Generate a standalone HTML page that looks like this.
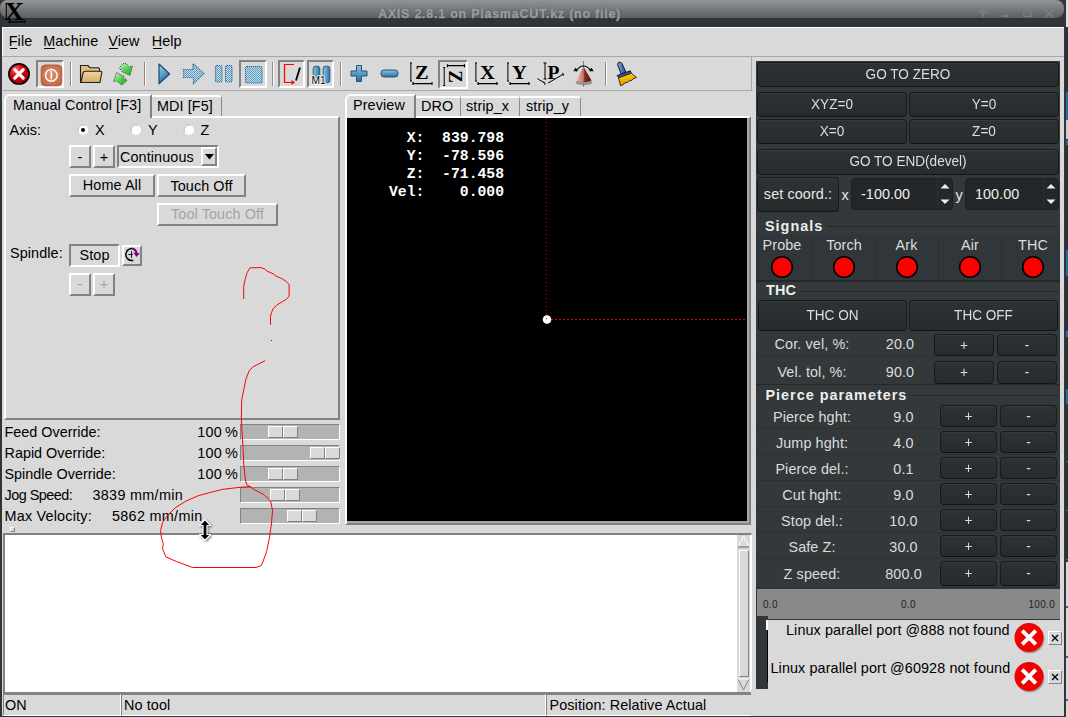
<!DOCTYPE html>
<html><head><meta charset="utf-8"><style>
html,body{margin:0;padding:0;}
body{width:1068px;height:717px;overflow:hidden;position:relative;background:#d9d9d9;font-family:"Liberation Sans",sans-serif;}
.a{position:absolute;}
.t{white-space:nowrap;line-height:1;}
</style></head><body>
<div class="a" style="left:0px;top:0px;width:1068px;height:717px;background:#d9d9d9;"></div>
<div class="a" style="left:0px;top:0px;width:1068px;height:27px;background:#2f3538;"></div>
<div class="a" style="left:0px;top:0px;width:1064px;height:17.5px;background:linear-gradient(#929597,#5a5f62);border-radius:7px 8px 8px 8px;"></div>
<div class="a" style="left:1066px;top:0px;width:2px;height:717px;background:#2b3337;"></div>
<div class="a" style="left:1066px;top:0px;width:2px;height:27px;background:#e0e0e0;"></div>
<div class="a" style="left:1066px;top:92px;width:2px;height:28px;background:#1f6f9f;"></div>
<div class="a" style="left:1066px;top:120px;width:2px;height:19px;background:#c8ccce;"></div>
<div class="a" style="left:1066px;top:140px;width:2px;height:5px;background:#1f6f9f;"></div>
<div class="a" style="left:1066px;top:250px;width:2px;height:26px;background:#1f6f9f;"></div>
<div class="a" style="left:1066px;top:331px;width:2px;height:6px;background:#1f6f9f;"></div>
<div class="a" style="left:1066px;top:389px;width:2px;height:15px;background:#1f6f9f;"></div>
<div class="a" style="left:1066px;top:461px;width:2px;height:1px;background:#1f6f9f;"></div>
<div class="a" style="left:1066px;top:510px;width:2px;height:1px;background:#1f6f9f;"></div>
<div class="a" style="left:1066px;top:559px;width:2px;height:1px;background:#1f6f9f;"></div>
<div class="a" style="left:1066px;top:562px;width:2px;height:155px;background:#d9d9d9;"></div>
<div class="a" style="left:1066px;top:606px;width:2px;height:2px;background:#1f6f9f;"></div>
<div class="a" style="left:1066px;top:656px;width:2px;height:2px;background:#1f6f9f;"></div>
<div class="a" style="left:1066px;top:699px;width:2px;height:2px;background:#1f6f9f;"></div>
<div class="a" style="left:0px;top:27px;width:2px;height:690px;background:#2f3538;"></div>
<div class="a" style="left:1064px;top:27px;width:2px;height:690px;background:#2f3538;"></div>
<div class="a" style="left:0px;top:716px;width:1066px;height:1px;background:#2f3538;"></div>
<svg class="a" style="left:0px;top:0px;" width="30" height="27" viewBox="0 0 30 27"><text x="4.6" y="19.7" font-family="Liberation Serif" font-weight="bold" font-size="24.5" fill="#000" transform="translate(4.6,19.7) scale(1.1,1) translate(-4.6,-19.7)">X</text><path d="M6.3 3.5v16" stroke="#000" stroke-width="1" fill="none"/><path d="M9.2 21.8h15.5M9.2 20.3v3M24.7 20.3v3" stroke="#000" stroke-width="1.2" fill="none"/></svg>
<div class="a t" style="left:299.50px;width:400px;text-align:center;top:8.42px;font-size:12.5px;letter-spacing:0.75px;color:#9a9ea0;font-weight:bold;font-family:'Liberation Sans', sans-serif;-webkit-text-stroke:0.35px #9a9ea0;text-shadow:0 0 1.5px rgba(40,45,48,0.8);">AXIS 2.8.1 on PlasmaCUT.kz (no file)</div>
<svg class="a" style="left:976px;top:6px;" width="90" height="16" viewBox="0 0 90 16"><g stroke="#7c8082" stroke-width="1.6" fill="none"><path d="M7.25 4v7M3.5 7.5l3.75-3.6 3.75 3.6"/><path d="M26 9.9h6" stroke-width="1.7"/><rect x="47.8" y="4.3" width="6.8" height="6.2" stroke-width="1.2"/><path d="M69.5 4l7.5 7M77 4l-7.5 7"/></g></svg>
<div class="a" style="left:2px;top:27px;width:1062px;height:1px;background:#ffffff;"></div>
<div class="a" style="left:2px;top:27px;width:1px;height:29px;background:#ffffff;"></div>
<div class="a" style="left:3px;top:56px;width:1061px;height:1px;background:#a8a8a8;"></div>
<div class="a t" style="left:8.70px;top:34.31px;font-size:14.4px;letter-spacing:0.1px;color:#000;font-weight:normal;font-family:'Liberation Sans', sans-serif;">File</div>
<div class="a t" style="left:43.20px;top:34.31px;font-size:14.4px;letter-spacing:0.1px;color:#000;font-weight:normal;font-family:'Liberation Sans', sans-serif;">Machine</div>
<div class="a t" style="left:108.20px;top:34.31px;font-size:14.4px;letter-spacing:0.1px;color:#000;font-weight:normal;font-family:'Liberation Sans', sans-serif;">View</div>
<div class="a t" style="left:151.70px;top:34.31px;font-size:14.4px;letter-spacing:0.1px;color:#000;font-weight:normal;font-family:'Liberation Sans', sans-serif;">Help</div>
<div class="a" style="left:9.5px;top:48px;width:7.5px;height:1px;background:#000;"></div>
<div class="a" style="left:44px;top:48px;width:11px;height:1px;background:#000;"></div>
<div class="a" style="left:109px;top:48px;width:9px;height:1px;background:#000;"></div>
<div class="a" style="left:152.5px;top:48px;width:9.5px;height:1px;background:#000;"></div>
<div class="a" style="left:3px;top:90px;width:749px;height:1px;background:#a8a8a8;"></div>
<div class="a" style="left:751px;top:57px;width:1px;height:34px;background:#a8a8a8;"></div>
<div class="a" style="left:70px;top:62px;width:1px;height:24px;background:#8a8a8a;"></div>
<div class="a" style="left:71px;top:62px;width:1px;height:24px;background:#ffffff;"></div>
<div class="a" style="left:144px;top:62px;width:1px;height:24px;background:#8a8a8a;"></div>
<div class="a" style="left:145px;top:62px;width:1px;height:24px;background:#ffffff;"></div>
<div class="a" style="left:272px;top:62px;width:1px;height:24px;background:#8a8a8a;"></div>
<div class="a" style="left:273px;top:62px;width:1px;height:24px;background:#ffffff;"></div>
<div class="a" style="left:340px;top:62px;width:1px;height:24px;background:#8a8a8a;"></div>
<div class="a" style="left:341px;top:62px;width:1px;height:24px;background:#ffffff;"></div>
<div class="a" style="left:605px;top:62px;width:1px;height:24px;background:#8a8a8a;"></div>
<div class="a" style="left:606px;top:62px;width:1px;height:24px;background:#ffffff;"></div>
<div class="a" style="left:36px;top:60px;width:28px;height:28px;box-sizing:border-box;background:#d9d9d9;border:2px solid;border-color:#828282 #ffffff #ffffff #828282;"></div>
<div class="a" style="left:239px;top:60px;width:28px;height:28px;box-sizing:border-box;background:#d9d9d9;border:2px solid;border-color:#828282 #ffffff #ffffff #828282;"></div>
<div class="a" style="left:278px;top:60px;width:27px;height:28px;box-sizing:border-box;background:#d9d9d9;border:2px solid;border-color:#828282 #ffffff #ffffff #828282;"></div>
<div class="a" style="left:307px;top:60px;width:27px;height:28px;box-sizing:border-box;background:#d9d9d9;border:2px solid;border-color:#828282 #ffffff #ffffff #828282;"></div>
<div class="a" style="left:438px;top:60px;width:30px;height:29px;box-sizing:border-box;background:#d9d9d9;border:2px solid;border-color:#828282 #ffffff #ffffff #828282;"></div>
<svg class="a" style="left:7px;top:62px;" width="25" height="25" viewBox="0 0 25 25"><defs><radialGradient id="es" cx="0.35" cy="0.3" r="0.75"><stop offset="0" stop-color="#ff6060"/><stop offset="0.45" stop-color="#dd0010"/><stop offset="1" stop-color="#a00000"/></radialGradient></defs><circle cx="12" cy="11.9" r="10.1" fill="url(#es)" stroke="#000" stroke-width="1.7"/><path d="M7.8 7.7l8.4 8.4M16.2 7.7l-8.4 8.4" stroke="#fff" stroke-width="3.1" stroke-linecap="round"/></svg>
<svg class="a" style="left:40px;top:64px;" width="23" height="23" viewBox="0 0 23 23"><defs><radialGradient id="pw" cx="0.5" cy="0.45" r="0.65"><stop offset="0" stop-color="#dc9575"/><stop offset="1" stop-color="#c4603e"/></radialGradient></defs><rect x="1.2" y="1" width="20.6" height="20.8" rx="4" fill="url(#pw)" stroke="#b04a2a" stroke-width="0.8"/><circle cx="11.3" cy="11.4" r="5.8" fill="none" stroke="#fff" stroke-width="1.5"/><path d="M11.3 7v8.3" stroke="#fff" stroke-width="1.5"/></svg>
<svg class="a" style="left:78px;top:62px;" width="26" height="24" viewBox="0 0 26 24"><defs><linearGradient id="fd" x1="0" y1="0" x2="0" y2="1"><stop offset="0" stop-color="#f0d6a0"/><stop offset="1" stop-color="#d8aa68"/></linearGradient></defs><path d="M2.5 3.5h7.3l2.2 2.3h8.3q1.2 0 1.2 1.2V20.5H2.5z" fill="#e2bd80" stroke="#1e1e1e" stroke-width="1.1" stroke-linejoin="round"/><path d="M7.5 9.3h15.2q1.3 0 1.1 1.2L22 20.5H2.8L4.8 12q0.5-2.7 2.7-2.7z" fill="url(#fd)" stroke="#1e1e1e" stroke-width="1.1" stroke-linejoin="round"/></svg>
<svg class="a" style="left:108px;top:60px;" width="30" height="28" viewBox="0 0 30 28"><defs><linearGradient id="rl" x1="0" y1="0" x2="1" y2="1"><stop offset="0" stop-color="#c8f5c8"/><stop offset="0.6" stop-color="#44cc44"/><stop offset="1" stop-color="#2aa52a"/></linearGradient></defs><g fill="url(#rl)" stroke="#333" stroke-width="0.9" stroke-dasharray="1 1.1" stroke-linejoin="round"><path d="M11 8.5L15 3.5 18 3.5 21.5 7 24.5 6 22 15.5 13.5 11.5 16 9.5 15 8.3 13 9.8z"/><path d="M5.5 21.5L8.5 12.5 16.5 16.5 14.5 18.3 15 19.5 17.2 18.3 19 20.5 14.5 24.5 12.5 24.5 9 21z"/></g></svg>
<svg class="a" style="left:156px;top:62px;" width="16" height="24" viewBox="0 0 16 24"><defs><linearGradient id="pl" x1="0" y1="0" x2="0.4" y2="1"><stop offset="0" stop-color="#a8dcef"/><stop offset="1" stop-color="#2468a0"/></linearGradient></defs><path d="M3 2L13.6 12 3 21.8z" fill="url(#pl)" stroke="#11507c" stroke-width="1.25" stroke-linejoin="round"/></svg>
<svg class="a" style="left:178px;top:58px;" width="90" height="32" viewBox="0 0 90 32"><defs><pattern id="chk" width="2" height="2" patternUnits="userSpaceOnUse"><rect width="2" height="2" fill="#b8dce9"/><rect width="1" height="1" fill="#6a9cbd"/><rect x="1" y="1" width="1" height="1" fill="#6a9cbd"/></pattern><linearGradient id="chg" x1="0" y1="0" x2="0" y2="1"><stop offset="0" stop-color="#fff" stop-opacity="0.25"/><stop offset="1" stop-color="#000" stop-opacity="0.08"/></linearGradient></defs><g stroke="#1f5a85" stroke-width="1.15" stroke-dasharray="1 1"><path d="M5.5 69.5H15V63.5L26 73.5 15.5 83.5V77.5H5.5z" transform="translate(0,-58)" fill="url(#chk)"/><rect x="37.5" y="7.5" width="6.5" height="16.5" rx="1.5" fill="url(#chk)"/><rect x="47.5" y="7.5" width="6.5" height="16.5" rx="1.5" fill="url(#chk)"/><rect x="67.5" y="8.5" width="16.5" height="16.5" rx="1.5" fill="url(#chk)"/></g></svg>
<svg class="a" style="left:282px;top:63px;" width="22" height="23" viewBox="0 0 22 23"><path d="M12 1.5H2.5V19.5H10" fill="none" stroke="#ff0000" stroke-width="1.2"/><path d="M9.5 17l3.5 2.5-3.5 2.5z" fill="#ff0000"/><path d="M18 4.5l-4 13" stroke="#000" stroke-width="1.8"/></svg>
<svg class="a" style="left:304px;top:58px;" width="34" height="32" viewBox="0 0 34 32"><defs><linearGradient id="m1" x1="0" y1="0" x2="1" y2="0"><stop offset="0" stop-color="#8cc4e0"/><stop offset="1" stop-color="#2b78a8"/></linearGradient><linearGradient id="bl" x1="0" y1="0" x2="0" y2="1"><stop offset="0" stop-color="#8cc4e0"/><stop offset="1" stop-color="#2a6e9e"/></linearGradient></defs><rect x="9.2" y="8.2" width="6.6" height="17" rx="2.5" fill="url(#m1)" stroke="#17537e" stroke-width="0.9"/><rect x="19.2" y="8.2" width="6.6" height="16.6" rx="2.5" fill="url(#m1)" stroke="#17537e" stroke-width="0.9"/><text x="7.6" y="26.1" font-family="Liberation Sans" font-size="10.2" fill="#000" stroke="#fff" stroke-width="1.6" paint-order="stroke" stroke-linejoin="round">M1</text></svg>
<svg class="a" style="left:350px;top:64px;" width="19" height="19" viewBox="0 0 19 19"><path d="M6.5 1.5h5v5.5h5.5v5h-5.5v5.5h-5v-5.5h-5.5v-5h5.5z" fill="url(#bl)" stroke="#1d5580" stroke-width="1" stroke-linejoin="round"/></svg>
<svg class="a" style="left:380px;top:69px;" width="19" height="10" viewBox="0 0 19 10"><rect x="1" y="1" width="17" height="7" rx="3" fill="url(#bl)" stroke="#1d5580" stroke-width="1"/></svg>
<svg class="a" style="left:410px;top:62px;" width="26" height="25" viewBox="0 0 26 25"><path d="M0.9 1v18M0 1h2M0 19h2" stroke="#000" stroke-width="1" fill="none"/><text x="5" y="17.2" font-family="Liberation Serif" font-weight="bold" font-size="19" fill="#000" transform="translate(5,17.2) scale(1.08,1) translate(-5,-17.2)">Z</text><path d="M3 21.6h19M3 20.1v3M22 20.1v3" stroke="#000" stroke-width="1.2" fill="none"/></svg>
<svg class="a" style="left:475px;top:62px;" width="26" height="25" viewBox="0 0 26 25"><path d="M0.9 1v18M0 1h2M0 19h2" stroke="#000" stroke-width="1" fill="none"/><text x="5" y="17.2" font-family="Liberation Serif" font-weight="bold" font-size="19" fill="#000" transform="translate(5,17.2) scale(1.08,1) translate(-5,-17.2)">X</text><path d="M3 21.6h19M3 20.1v3M22 20.1v3" stroke="#000" stroke-width="1.2" fill="none"/></svg>
<svg class="a" style="left:507px;top:62px;" width="26" height="25" viewBox="0 0 26 25"><path d="M0.9 1v18M0 1h2M0 19h2" stroke="#000" stroke-width="1" fill="none"/><text x="5" y="17.2" font-family="Liberation Serif" font-weight="bold" font-size="19" fill="#000" transform="translate(5,17.2) scale(1.08,1) translate(-5,-17.2)">Y</text><path d="M3 21.6h19M3 20.1v3M22 20.1v3" stroke="#000" stroke-width="1.2" fill="none"/></svg>
<svg class="a" style="left:440px;top:61px;" width="28" height="28" viewBox="0 0 28 28"><path d="M4.2 6.5v18M3.2 6.5h2M3.2 24.5h2" stroke="#000" stroke-width="1" fill="none"/><path d="M7.5 4.7h17M7.5 3.2v3M24.5 3.2v3" stroke="#000" stroke-width="1.2" fill="none"/><g transform="translate(15.3,15.6) rotate(90)"><text x="0" y="0" text-anchor="middle" dominant-baseline="central" font-family="Liberation Serif" font-weight="bold" font-size="19" fill="#000">Z</text></g></svg>
<svg class="a" style="left:534px;top:60px;" width="32" height="28" viewBox="0 0 32 28"><path d="M11 3v16M9.5 3h3M9.5 19h3" stroke="#000" stroke-width="1" fill="none"/><text x="13.5" y="19" font-family="Liberation Serif" font-weight="bold" font-size="19.5" fill="#000">P</text><path d="M3.4 18.6l7.3 4.5M14 23.1l15.3-9" stroke="#000" stroke-width="1" fill="none"/><path d="M9.5 21.8l1.6 1.5-0.4 1.6M28.5 12.8l1 1.5-0.3 1.5" stroke="#000" stroke-width="1" fill="none"/></svg>
<svg class="a" style="left:572px;top:60px;" width="24" height="28" viewBox="0 0 24 28"><defs><linearGradient id="cn" x1="0" y1="0" x2="1" y2="0"><stop offset="0" stop-color="#f8b8b0"/><stop offset="0.45" stop-color="#d86a60"/><stop offset="0.55" stop-color="#8a2a22"/><stop offset="1" stop-color="#4a0e0a"/></linearGradient></defs><ellipse cx="12" cy="22.5" rx="8.5" ry="2.8" fill="#000" opacity="0.3"/><path d="M11.5 6.5L4.5 20.5q7.5 3.5 15 0z" fill="url(#cn)"/><path d="M11.5 1.5v26" stroke="#fff" stroke-width="1"/><path d="M11.5 1.5v26" stroke="#000" stroke-width="1" stroke-dasharray="1 1"/><path d="M4 11.5q3-5.5 7.5-5.5M19 11.5q-3-5.5-7.5-5.5" stroke="#000" stroke-width="1.1" fill="none"/><path d="M1.3 11.5l4.8-1.2-2.8-2.6z M21.7 11.5l-4.8-1.2 2.8-2.6z" fill="#000"/></svg>
<svg class="a" style="left:612px;top:58px;" width="30" height="32" viewBox="0 0 30 32"><defs><linearGradient id="br" x1="0" y1="0" x2="0.3" y2="1"><stop offset="0" stop-color="#ffe800"/><stop offset="1" stop-color="#e08a00"/></linearGradient><linearGradient id="bh" x1="0" y1="0" x2="1" y2="0"><stop offset="0" stop-color="#8aa0e0"/><stop offset="1" stop-color="#2a45a0"/></linearGradient></defs><path d="M5.5 6.5Q6 3.5 8 4.2Q9.6 4.5 10.3 6L13.8 14 9.2 16.2z" fill="url(#bh)" stroke="#111" stroke-width="0.9"/><path d="M5.2 17.5L18.3 12.8 19.4 15.3 6.6 19.8z" fill="#3550b0" stroke="#111" stroke-width="0.9"/><path d="M6.6 19.8L19.4 15.3 24.5 19.5 21 20.8 20 22.3 17 23 15.5 24.5 13 24.8 11.5 26.5 8.5 27.7z" fill="url(#br)" stroke="#222" stroke-width="0.9"/></svg>
<div class="a" style="left:4px;top:116px;width:336px;height:304px;box-sizing:border-box;border-style:solid;border-width:2px 2px 2px 2px;border-color:#fff #828282 #828282 #fff;background:#d9d9d9;"></div>
<div class="a" style="left:150px;top:95px;width:72px;height:21px;box-sizing:border-box;border-top:2px solid #fff;border-right:1px solid #8a8a8a;border-top-right-radius:4px;background:#d9d9d9;"></div>
<div class="a" style="left:4px;top:94px;width:148px;height:24px;box-sizing:border-box;border-top:2px solid #fff;border-left:2px solid #fff;border-right:2px solid #828282;border-top-left-radius:6px;background:#d9d9d9;"></div>
<div class="a t" style="left:13.00px;top:97.61px;font-size:14.4px;letter-spacing:0.1px;color:#000;font-weight:normal;font-family:'Liberation Sans', sans-serif;">Manual Control [F3]</div>
<div class="a t" style="left:157.00px;top:99.01px;font-size:14.4px;letter-spacing:0.1px;color:#000;font-weight:normal;font-family:'Liberation Sans', sans-serif;">MDI [F5]</div>
<div class="a t" style="left:9.50px;top:123.41px;font-size:14.4px;letter-spacing:0.1px;color:#000;font-weight:normal;font-family:'Liberation Sans', sans-serif;">Axis:</div>
<svg class="a" style="left:77px;top:124px;" width="12" height="12" viewBox="0 0 12 12"><circle cx="6" cy="6" r="5" fill="#fff"/><path d="M1.5 8A5 5 0 0 1 8 1.3" stroke="#b8b8b8" stroke-width="1" fill="none"/><circle cx="6" cy="6" r="2" fill="#000"/></svg>
<div class="a t" style="left:95.00px;top:123.41px;font-size:14.4px;letter-spacing:0.1px;color:#000;font-weight:normal;font-family:'Liberation Sans', sans-serif;">X</div>
<svg class="a" style="left:130px;top:124px;" width="12" height="12" viewBox="0 0 12 12"><circle cx="6" cy="6" r="5" fill="#fff"/><path d="M1.5 8A5 5 0 0 1 8 1.3" stroke="#b8b8b8" stroke-width="1" fill="none"/></svg>
<div class="a t" style="left:148.00px;top:123.41px;font-size:14.4px;letter-spacing:0.1px;color:#000;font-weight:normal;font-family:'Liberation Sans', sans-serif;">Y</div>
<svg class="a" style="left:183px;top:124px;" width="12" height="12" viewBox="0 0 12 12"><circle cx="6" cy="6" r="5" fill="#fff"/><path d="M1.5 8A5 5 0 0 1 8 1.3" stroke="#b8b8b8" stroke-width="1" fill="none"/></svg>
<div class="a t" style="left:200.50px;top:123.41px;font-size:14.4px;letter-spacing:0.1px;color:#000;font-weight:normal;font-family:'Liberation Sans', sans-serif;">Z</div>
<div class="a" style="left:69px;top:145px;width:22px;height:23px;box-sizing:border-box;background:#d9d9d9;border:2px solid;border-color:#ffffff #828282 #828282 #ffffff;"></div>
<div class="a t" style="left:70.00px;width:20px;text-align:center;top:149.61px;font-size:14.4px;letter-spacing:0.1px;color:#000;font-weight:normal;font-family:'Liberation Sans', sans-serif;">-</div>
<div class="a" style="left:93px;top:145px;width:22px;height:23px;box-sizing:border-box;background:#d9d9d9;border:2px solid;border-color:#ffffff #828282 #828282 #ffffff;"></div>
<div class="a t" style="left:94.00px;width:20px;text-align:center;top:149.61px;font-size:14.4px;letter-spacing:0.1px;color:#000;font-weight:normal;font-family:'Liberation Sans', sans-serif;">+</div>
<div class="a" style="left:117px;top:145px;width:102px;height:23px;box-sizing:border-box;background:#d9d9d9;border:2px solid;border-color:#828282 #ffffff #ffffff #828282;"></div>
<div class="a t" style="left:120.00px;top:149.61px;font-size:14.4px;letter-spacing:0.1px;color:#000;font-weight:normal;font-family:'Liberation Sans', sans-serif;">Continuous</div>
<div class="a" style="left:201px;top:147px;width:16px;height:19px;box-sizing:border-box;background:#d9d9d9;border:2px solid;border-color:#ffffff #828282 #828282 #ffffff;"></div>
<svg class="a" style="left:204px;top:153px;" width="12" height="8" viewBox="0 0 12 8"><path d="M1 1h9l-4.5 5.5z" fill="#000"/></svg>
<div class="a" style="left:69px;top:174px;width:86px;height:23px;box-sizing:border-box;background:#d9d9d9;border:2px solid;border-color:#ffffff #828282 #828282 #ffffff;"></div>
<div class="a t" style="left:67.00px;width:90px;text-align:center;top:178.21px;font-size:14.4px;letter-spacing:0.1px;color:#000;font-weight:normal;font-family:'Liberation Sans', sans-serif;">Home All</div>
<div class="a" style="left:157px;top:174px;width:89px;height:23px;box-sizing:border-box;background:#d9d9d9;border:2px solid;border-color:#ffffff #828282 #828282 #ffffff;"></div>
<div class="a t" style="left:156.50px;width:90px;text-align:center;top:178.61px;font-size:14.4px;letter-spacing:0.1px;color:#000;font-weight:normal;font-family:'Liberation Sans', sans-serif;">Touch Off</div>
<div class="a" style="left:157px;top:203px;width:121px;height:23px;box-sizing:border-box;background:#d9d9d9;border:2px solid;border-color:#ffffff #828282 #828282 #ffffff;"></div>
<div class="a t" style="left:157.50px;width:120px;text-align:center;top:207.41px;font-size:14.4px;letter-spacing:0.1px;color:#a3a3a3;font-weight:normal;font-family:'Liberation Sans', sans-serif;">Tool Touch Off</div>
<div class="a t" style="left:10.00px;top:246.41px;font-size:14.4px;letter-spacing:0.1px;color:#000;font-weight:normal;font-family:'Liberation Sans', sans-serif;">Spindle:</div>
<div class="a" style="left:69px;top:244px;width:51px;height:23px;box-sizing:border-box;background:#d9d9d9;border:2px solid;border-color:#828282 #ffffff #ffffff #828282;"></div>
<div class="a t" style="left:69.50px;width:50px;text-align:center;top:248.31px;font-size:14.4px;letter-spacing:0.1px;color:#000;font-weight:normal;font-family:'Liberation Sans', sans-serif;">Stop</div>
<div class="a" style="left:122px;top:245px;width:20px;height:21px;box-sizing:border-box;background:#d9d9d9;border:2px solid;border-color:#ffffff #828282 #828282 #ffffff;"></div>
<svg class="a" style="left:124px;top:247px;" width="17" height="17" viewBox="0 0 17 17"><path d="M8.8 1.6A6 6 0 1 0 8.3 13.5l1 0.1" stroke="#000" stroke-width="1.5" fill="none"/><path d="M7.5 4.2v6.6M4.4 7.5h4.4" stroke="#000" stroke-width="0.9"/><path d="M8.5 1.9Q11.8 2.2 12.6 6" stroke="#800080" stroke-width="2.1" fill="none"/><path d="M9.3 5.6L15.8 6.2 12.5 10z" fill="#800080"/></svg>
<div class="a" style="left:69px;top:273px;width:22px;height:23px;box-sizing:border-box;background:#d9d9d9;border:2px solid;border-color:#ffffff #828282 #828282 #ffffff;"></div>
<div class="a t" style="left:70.00px;width:20px;text-align:center;top:277.31px;font-size:14.4px;letter-spacing:0.1px;color:#a3a3a3;font-weight:normal;font-family:'Liberation Sans', sans-serif;">-</div>
<div class="a" style="left:93px;top:273px;width:22px;height:23px;box-sizing:border-box;background:#d9d9d9;border:2px solid;border-color:#ffffff #828282 #828282 #ffffff;"></div>
<div class="a t" style="left:94.00px;width:20px;text-align:center;top:277.31px;font-size:14.4px;letter-spacing:0.1px;color:#a3a3a3;font-weight:normal;font-family:'Liberation Sans', sans-serif;">+</div>
<div class="a t" style="left:4.50px;top:425.11px;font-size:14.4px;letter-spacing:0.0px;color:#000;font-weight:normal;font-family:'Liberation Sans', sans-serif;">Feed Override:</div>
<div class="a t" style="left:178.00px;width:60px;text-align:right;top:425.11px;font-size:14.4px;letter-spacing:0.2px;color:#000;font-weight:normal;font-family:'Liberation Sans', sans-serif;">100&#8201;%</div>
<div class="a" style="left:240px;top:424px;width:100px;height:16px;box-sizing:border-box;background:#b3b3b3;border:1px solid;border-color:#828282 #ffffff #ffffff #828282;"></div>
<div class="a" style="left:268px;top:426px;width:15px;height:12px;box-sizing:border-box;background:#d9d9d9;border:1px solid;border-color:#ffffff #828282 #828282 #ffffff;"></div>
<div class="a" style="left:283px;top:426px;width:15px;height:12px;box-sizing:border-box;background:#d9d9d9;border:1px solid;border-color:#ffffff #828282 #828282 #ffffff;"></div>
<div class="a t" style="left:4.50px;top:446.31px;font-size:14.4px;letter-spacing:0.0px;color:#000;font-weight:normal;font-family:'Liberation Sans', sans-serif;">Rapid Override:</div>
<div class="a t" style="left:178.00px;width:60px;text-align:right;top:446.31px;font-size:14.4px;letter-spacing:0.2px;color:#000;font-weight:normal;font-family:'Liberation Sans', sans-serif;">100&#8201;%</div>
<div class="a" style="left:240px;top:445px;width:100px;height:16px;box-sizing:border-box;background:#b3b3b3;border:1px solid;border-color:#828282 #ffffff #ffffff #828282;"></div>
<div class="a" style="left:310px;top:447px;width:15px;height:12px;box-sizing:border-box;background:#d9d9d9;border:1px solid;border-color:#ffffff #828282 #828282 #ffffff;"></div>
<div class="a" style="left:325px;top:447px;width:15px;height:12px;box-sizing:border-box;background:#d9d9d9;border:1px solid;border-color:#ffffff #828282 #828282 #ffffff;"></div>
<div class="a t" style="left:4.50px;top:467.21px;font-size:14.4px;letter-spacing:0.0px;color:#000;font-weight:normal;font-family:'Liberation Sans', sans-serif;">Spindle Override:</div>
<div class="a t" style="left:178.00px;width:60px;text-align:right;top:467.21px;font-size:14.4px;letter-spacing:0.2px;color:#000;font-weight:normal;font-family:'Liberation Sans', sans-serif;">100&#8201;%</div>
<div class="a" style="left:240px;top:466px;width:100px;height:16px;box-sizing:border-box;background:#b3b3b3;border:1px solid;border-color:#828282 #ffffff #ffffff #828282;"></div>
<div class="a" style="left:268px;top:468px;width:15px;height:12px;box-sizing:border-box;background:#d9d9d9;border:1px solid;border-color:#ffffff #828282 #828282 #ffffff;"></div>
<div class="a" style="left:283px;top:468px;width:15px;height:12px;box-sizing:border-box;background:#d9d9d9;border:1px solid;border-color:#ffffff #828282 #828282 #ffffff;"></div>
<div class="a t" style="left:4.50px;top:488.41px;font-size:14.4px;letter-spacing:-0.5px;color:#000;font-weight:normal;font-family:'Liberation Sans', sans-serif;">Jog Speed:</div>
<div class="a t" style="left:92.50px;top:488.41px;font-size:14.4px;letter-spacing:0.3px;color:#000;font-weight:normal;font-family:'Liberation Sans', sans-serif;">3839 mm/min</div>
<div class="a" style="left:240px;top:487px;width:100px;height:16px;box-sizing:border-box;background:#b3b3b3;border:1px solid;border-color:#828282 #ffffff #ffffff #828282;"></div>
<div class="a" style="left:270px;top:489px;width:15px;height:12px;box-sizing:border-box;background:#d9d9d9;border:1px solid;border-color:#ffffff #828282 #828282 #ffffff;"></div>
<div class="a" style="left:285px;top:489px;width:15px;height:12px;box-sizing:border-box;background:#d9d9d9;border:1px solid;border-color:#ffffff #828282 #828282 #ffffff;"></div>
<div class="a t" style="left:4.50px;top:509.01px;font-size:14.4px;letter-spacing:0.2px;color:#000;font-weight:normal;font-family:'Liberation Sans', sans-serif;">Max Velocity:</div>
<div class="a t" style="left:112.00px;top:509.01px;font-size:14.4px;letter-spacing:0.3px;color:#000;font-weight:normal;font-family:'Liberation Sans', sans-serif;">5862 mm/min</div>
<div class="a" style="left:240px;top:508px;width:100px;height:16px;box-sizing:border-box;background:#b3b3b3;border:1px solid;border-color:#828282 #ffffff #ffffff #828282;"></div>
<div class="a" style="left:287px;top:510px;width:15px;height:12px;box-sizing:border-box;background:#d9d9d9;border:1px solid;border-color:#ffffff #828282 #828282 #ffffff;"></div>
<div class="a" style="left:302px;top:510px;width:15px;height:12px;box-sizing:border-box;background:#d9d9d9;border:1px solid;border-color:#ffffff #828282 #828282 #ffffff;"></div>
<div class="a" style="left:10px;top:527px;width:5px;height:5px;box-sizing:border-box;border:1px solid;border-color:#fff #828282 #828282 #fff;"></div>
<div class="a" style="left:3px;top:533px;width:749px;height:161px;box-sizing:border-box;border-style:solid;border-width:2px 1px 0 2px;border-color:#828282 #fff #fff #828282;background:#fff;"></div>
<div class="a" style="left:737px;top:535px;width:13px;height:157px;background:#d9d9d9;"></div>
<svg class="a" style="left:737px;top:535px;" width="13" height="13" viewBox="0 0 13 13"><path d="M6.5 1L12 12H1z" fill="#d9d9d9" stroke="#fff" stroke-width="1"/><path d="M12 12H1" stroke="#828282" stroke-width="1.5"/></svg>
<div class="a" style="left:739px;top:550px;width:10px;height:127px;box-sizing:border-box;background:#d9d9d9;border:1px solid;border-color:#ffffff #828282 #828282 #ffffff;"></div>
<svg class="a" style="left:737px;top:678px;" width="13" height="13" viewBox="0 0 13 13"><path d="M6.5 12L12 1H1z" fill="#d9d9d9" stroke="#828282" stroke-width="1"/><path d="M1 1h11" stroke="#fff" stroke-width="1.5"/></svg>
<div class="a" style="left:3px;top:692px;width:749px;height:2px;background:#828282;"></div>
<div class="a" style="left:3px;top:694px;width:118px;height:22px;box-sizing:border-box;background:#d9d9d9;border:1px solid;border-color:#828282 #ffffff #ffffff #828282;"></div>
<div class="a" style="left:121px;top:694px;width:425px;height:22px;box-sizing:border-box;background:#d9d9d9;border:1px solid;border-color:#828282 #ffffff #ffffff #828282;"></div>
<div class="a" style="left:546px;top:694px;width:206px;height:22px;box-sizing:border-box;background:#d9d9d9;border:1px solid;border-color:#828282 #ffffff #ffffff #828282;"></div>
<div class="a t" style="left:5.00px;top:697.81px;font-size:14.4px;letter-spacing:0.1px;color:#000;font-weight:normal;font-family:'Liberation Sans', sans-serif;">ON</div>
<div class="a t" style="left:124.00px;top:697.81px;font-size:14.4px;letter-spacing:0.1px;color:#000;font-weight:normal;font-family:'Liberation Sans', sans-serif;">No tool</div>
<div class="a t" style="left:549.50px;top:697.81px;font-size:14.4px;letter-spacing:0.1px;color:#000;font-weight:normal;font-family:'Liberation Sans', sans-serif;">Position: Relative Actual</div>
<div class="a" style="left:345px;top:116px;width:406px;height:409px;box-sizing:border-box;border-style:solid;border-width:2px;border-color:#fff #828282 #828282 #fff;background:#d9d9d9;"></div>
<div class="a" style="left:347px;top:118px;width:402px;height:405px;background:#a8a8a8;"></div>
<div class="a" style="left:347px;top:118px;width:400px;height:403px;background:#000;"></div>
<div class="a" style="left:415px;top:96px;width:46px;height:20px;box-sizing:border-box;border-top:2px solid #fff;border-right:1px solid #8a8a8a;border-top-right-radius:4px;background:#d9d9d9;"></div>
<div class="a" style="left:461px;top:96px;width:59px;height:20px;box-sizing:border-box;border-top:2px solid #fff;border-right:1px solid #8a8a8a;border-top-right-radius:4px;background:#d9d9d9;"></div>
<div class="a" style="left:520px;top:96px;width:61px;height:20px;box-sizing:border-box;border-top:2px solid #fff;border-right:1px solid #8a8a8a;border-top-right-radius:4px;background:#d9d9d9;"></div>
<div class="a" style="left:345px;top:94px;width:71px;height:24px;box-sizing:border-box;border-top:2px solid #fff;border-left:2px solid #fff;border-right:2px solid #828282;border-top-left-radius:6px;background:#d9d9d9;"></div>
<div class="a t" style="left:353.00px;top:97.61px;font-size:14.4px;letter-spacing:0.1px;color:#000;font-weight:normal;font-family:'Liberation Sans', sans-serif;">Preview</div>
<div class="a t" style="left:421.00px;top:99.01px;font-size:14.4px;letter-spacing:0.1px;color:#000;font-weight:normal;font-family:'Liberation Sans', sans-serif;">DRO</div>
<div class="a t" style="left:466.00px;top:99.01px;font-size:14.4px;letter-spacing:0.1px;color:#000;font-weight:normal;font-family:'Liberation Sans', sans-serif;">strip_x</div>
<div class="a t" style="left:526.00px;top:99.01px;font-size:14.4px;letter-spacing:0.1px;color:#000;font-weight:normal;font-family:'Liberation Sans', sans-serif;">strip_y</div>
<div class="a t" style="left:389.00px;top:130.76px;font-size:14.75px;letter-spacing:0px;color:#fff;font-weight:bold;font-family:'Liberation Mono', monospace;">&nbsp;&nbsp;X:&nbsp;&nbsp;839.798</div>
<div class="a t" style="left:389.00px;top:148.76px;font-size:14.75px;letter-spacing:0px;color:#fff;font-weight:bold;font-family:'Liberation Mono', monospace;">&nbsp;&nbsp;Y:&nbsp;&nbsp;-78.596</div>
<div class="a t" style="left:389.00px;top:166.76px;font-size:14.75px;letter-spacing:0px;color:#fff;font-weight:bold;font-family:'Liberation Mono', monospace;">&nbsp;&nbsp;Z:&nbsp;&nbsp;-71.458</div>
<div class="a t" style="left:389.00px;top:184.76px;font-size:14.75px;letter-spacing:0px;color:#fff;font-weight:bold;font-family:'Liberation Mono', monospace;">Vel:&nbsp;&nbsp;&nbsp;&nbsp;0.000</div>
<div class="a" style="left:546px;top:118px;width:1px;height:197px;background:repeating-linear-gradient(to bottom,#e00000 0 1px,transparent 1px 4px);"></div>
<div class="a" style="left:551px;top:319px;width:196px;height:1px;background:repeating-linear-gradient(to right,#e00000 0 2px,transparent 2px 4px);"></div>
<svg class="a" style="left:542px;top:315px;" width="10" height="10" viewBox="0 0 10 10"><circle cx="5" cy="4.5" r="4.3" fill="#fff"/><rect x="4" y="3" width="1" height="1" fill="#e00000"/></svg>
<div class="a" style="left:756px;top:61px;width:304px;height:559px;background:#33393b;"></div>
<div class="a" style="left:757px;top:62px;width:302px;height:25px;box-sizing:border-box;background:linear-gradient(#2d3234,#272b2d);border:1px solid #181b1c;border-bottom-color:#131616;border-radius:4px;box-shadow:inset 0 1px 0 rgba(255,255,255,0.04);"></div>
<div class="a t" style="left:757.00px;width:302px;text-align:center;top:67.25px;font-size:14px;letter-spacing:0px;color:#dedede;font-weight:normal;font-family:'Liberation Sans', sans-serif;transform:scaleX(0.97);transform-origin:center center;">GO TO ZERO</div>
<div class="a" style="left:757px;top:92px;width:150px;height:25px;box-sizing:border-box;background:linear-gradient(#2d3234,#272b2d);border:1px solid #181b1c;border-bottom-color:#131616;border-radius:4px;box-shadow:inset 0 1px 0 rgba(255,255,255,0.04);"></div>
<div class="a t" style="left:757.00px;width:150px;text-align:center;top:97.45px;font-size:14px;letter-spacing:0px;color:#dedede;font-weight:normal;font-family:'Liberation Sans', sans-serif;transform:scaleX(0.97);transform-origin:center center;">XYZ=0</div>
<div class="a" style="left:909px;top:92px;width:150px;height:25px;box-sizing:border-box;background:linear-gradient(#2d3234,#272b2d);border:1px solid #181b1c;border-bottom-color:#131616;border-radius:4px;box-shadow:inset 0 1px 0 rgba(255,255,255,0.04);"></div>
<div class="a t" style="left:909.00px;width:150px;text-align:center;top:97.45px;font-size:14px;letter-spacing:0px;color:#dedede;font-weight:normal;font-family:'Liberation Sans', sans-serif;transform:scaleX(0.97);transform-origin:center center;">Y=0</div>
<div class="a" style="left:757px;top:119px;width:150px;height:25px;box-sizing:border-box;background:linear-gradient(#2d3234,#272b2d);border:1px solid #181b1c;border-bottom-color:#131616;border-radius:4px;box-shadow:inset 0 1px 0 rgba(255,255,255,0.04);"></div>
<div class="a t" style="left:757.00px;width:150px;text-align:center;top:124.45px;font-size:14px;letter-spacing:0px;color:#dedede;font-weight:normal;font-family:'Liberation Sans', sans-serif;transform:scaleX(0.97);transform-origin:center center;">X=0</div>
<div class="a" style="left:909px;top:119px;width:150px;height:25px;box-sizing:border-box;background:linear-gradient(#2d3234,#272b2d);border:1px solid #181b1c;border-bottom-color:#131616;border-radius:4px;box-shadow:inset 0 1px 0 rgba(255,255,255,0.04);"></div>
<div class="a t" style="left:909.00px;width:150px;text-align:center;top:124.45px;font-size:14px;letter-spacing:0px;color:#dedede;font-weight:normal;font-family:'Liberation Sans', sans-serif;transform:scaleX(0.97);transform-origin:center center;">Z=0</div>
<div class="a" style="left:757px;top:149px;width:302px;height:26px;box-sizing:border-box;background:linear-gradient(#2d3234,#272b2d);border:1px solid #181b1c;border-bottom-color:#131616;border-radius:4px;box-shadow:inset 0 1px 0 rgba(255,255,255,0.04);"></div>
<div class="a t" style="left:757.00px;width:302px;text-align:center;top:154.45px;font-size:14px;letter-spacing:0px;color:#dedede;font-weight:normal;font-family:'Liberation Sans', sans-serif;transform:scaleX(0.97);transform-origin:center center;">GO TO END(devel)</div>
<div class="a" style="left:757px;top:177px;width:82px;height:35px;box-sizing:border-box;background:linear-gradient(#2d3234,#272b2d);border:1px solid #181b1c;border-bottom-color:#131616;border-radius:4px;box-shadow:inset 0 1px 0 rgba(255,255,255,0.04);"></div>
<div class="a t" style="left:757.00px;width:82px;text-align:center;top:187.41px;font-size:14.4px;letter-spacing:0.1px;color:#e8e8e7;font-weight:normal;font-family:'Liberation Sans', sans-serif;">set coord.:</div>
<div class="a t" style="left:841.50px;top:187.61px;font-size:14.4px;letter-spacing:0.1px;color:#e8e8e7;font-weight:normal;font-family:'Liberation Sans', sans-serif;">x</div>
<div class="a" style="left:851px;top:178px;width:102px;height:32px;box-sizing:border-box;background:#232729;border:1px solid #1c1f20;border-radius:4px;"></div>
<div class="a" style="left:937px;top:179px;width:1px;height:30px;background:#2b3033;"></div>
<svg class="a" style="left:940px;top:183px;" width="11" height="23" viewBox="0 0 11 23"><path d="M0.5 5.5L5 1l4.5 4.5z" fill="#eeeeec"/><path d="M0.5 16.5L5 21l4.5-4.5z" fill="#eeeeec"/></svg>
<div class="a t" style="left:861.00px;top:187.21px;font-size:14.4px;letter-spacing:0.05px;color:#eeeeec;font-weight:normal;font-family:'Liberation Sans', sans-serif;">-100.00</div>
<div class="a" style="left:965px;top:178px;width:94px;height:32px;box-sizing:border-box;background:#232729;border:1px solid #1c1f20;border-radius:4px;"></div>
<div class="a" style="left:1043px;top:179px;width:1px;height:30px;background:#2b3033;"></div>
<svg class="a" style="left:1046px;top:183px;" width="11" height="23" viewBox="0 0 11 23"><path d="M0.5 5.5L5 1l4.5 4.5z" fill="#eeeeec"/><path d="M0.5 16.5L5 21l4.5-4.5z" fill="#eeeeec"/></svg>
<div class="a t" style="left:975.00px;top:187.21px;font-size:14.4px;letter-spacing:0.05px;color:#eeeeec;font-weight:normal;font-family:'Liberation Sans', sans-serif;">100.00</div>
<div class="a t" style="left:955.50px;top:187.61px;font-size:14.4px;letter-spacing:0.1px;color:#e8e8e7;font-weight:normal;font-family:'Liberation Sans', sans-serif;">y</div>
<div class="a t" style="left:765.00px;top:218.81px;font-size:14.4px;letter-spacing:1.0px;color:#eeeeec;font-weight:bold;font-family:'Liberation Sans', sans-serif;">Signals</div>
<div class="a" style="left:827px;top:226px;width:231px;height:1px;background:#23272a;"></div>
<div class="a" style="left:756px;top:235px;width:304px;height:45px;background:#30363a;"></div>
<div class="a" style="left:812px;top:236px;width:1px;height:44px;background:#2a2f31;"></div>
<div class="a" style="left:875px;top:236px;width:1px;height:44px;background:#2a2f31;"></div>
<div class="a" style="left:938px;top:236px;width:1px;height:44px;background:#2a2f31;"></div>
<div class="a" style="left:1001px;top:236px;width:1px;height:44px;background:#2a2f31;"></div>
<div class="a t" style="left:752.00px;width:60px;text-align:center;top:237.81px;font-size:14.4px;letter-spacing:0.1px;color:#dcdcdc;font-weight:normal;font-family:'Liberation Sans', sans-serif;">Probe</div>
<svg class="a" style="left:770px;top:255px;" width="24" height="24" viewBox="0 0 24 24"><circle cx="12" cy="12" r="10.3" fill="#ff0000" stroke="#000" stroke-width="1.6"/></svg>
<div class="a t" style="left:814.00px;width:60px;text-align:center;top:237.81px;font-size:14.4px;letter-spacing:0.1px;color:#dcdcdc;font-weight:normal;font-family:'Liberation Sans', sans-serif;">Torch</div>
<svg class="a" style="left:832px;top:255px;" width="24" height="24" viewBox="0 0 24 24"><circle cx="12" cy="12" r="10.3" fill="#ff0000" stroke="#000" stroke-width="1.6"/></svg>
<div class="a t" style="left:876.50px;width:60px;text-align:center;top:237.81px;font-size:14.4px;letter-spacing:0.1px;color:#dcdcdc;font-weight:normal;font-family:'Liberation Sans', sans-serif;">Ark</div>
<svg class="a" style="left:894.5px;top:255px;" width="24" height="24" viewBox="0 0 24 24"><circle cx="12" cy="12" r="10.3" fill="#ff0000" stroke="#000" stroke-width="1.6"/></svg>
<div class="a t" style="left:940.00px;width:60px;text-align:center;top:237.81px;font-size:14.4px;letter-spacing:0.1px;color:#dcdcdc;font-weight:normal;font-family:'Liberation Sans', sans-serif;">Air</div>
<svg class="a" style="left:958px;top:255px;" width="24" height="24" viewBox="0 0 24 24"><circle cx="12" cy="12" r="10.3" fill="#ff0000" stroke="#000" stroke-width="1.6"/></svg>
<div class="a t" style="left:1003.00px;width:60px;text-align:center;top:237.81px;font-size:14.4px;letter-spacing:0.1px;color:#dcdcdc;font-weight:normal;font-family:'Liberation Sans', sans-serif;">THC</div>
<svg class="a" style="left:1021px;top:255px;" width="24" height="24" viewBox="0 0 24 24"><circle cx="12" cy="12" r="10.3" fill="#ff0000" stroke="#000" stroke-width="1.6"/></svg>
<div class="a" style="left:756px;top:280px;width:304px;height:2px;background:#23272a;"></div>
<div class="a t" style="left:766.00px;top:283.11px;font-size:14.4px;letter-spacing:0.2px;color:#eeeeec;font-weight:bold;font-family:'Liberation Sans', sans-serif;">THC</div>
<div class="a" style="left:801px;top:291px;width:257px;height:1px;background:#23272a;"></div>
<div class="a" style="left:758px;top:300px;width:149px;height:31px;box-sizing:border-box;background:linear-gradient(#2d3234,#272b2d);border:1px solid #181b1c;border-bottom-color:#131616;border-radius:4px;box-shadow:inset 0 1px 0 rgba(255,255,255,0.04);"></div>
<div class="a t" style="left:758.00px;width:149px;text-align:center;top:307.85px;font-size:14px;letter-spacing:0px;color:#dedede;font-weight:normal;font-family:'Liberation Sans', sans-serif;transform:scaleX(0.97);transform-origin:center center;">THC ON</div>
<div class="a" style="left:909px;top:300px;width:149px;height:31px;box-sizing:border-box;background:linear-gradient(#2d3234,#272b2d);border:1px solid #181b1c;border-bottom-color:#131616;border-radius:4px;box-shadow:inset 0 1px 0 rgba(255,255,255,0.04);"></div>
<div class="a t" style="left:909.00px;width:149px;text-align:center;top:307.85px;font-size:14px;letter-spacing:0px;color:#dedede;font-weight:normal;font-family:'Liberation Sans', sans-serif;transform:scaleX(0.97);transform-origin:center center;">THC OFF</div>
<div class="a" style="left:756px;top:356px;width:304px;height:1px;background:#2b3033;"></div>
<div class="a t" style="left:757.00px;width:110px;text-align:center;top:337.31px;font-size:14.4px;letter-spacing:0.1px;color:#dcdcdc;font-weight:normal;font-family:'Liberation Sans', sans-serif;">Cor. vel, %:</div>
<div class="a t" style="left:870.00px;width:60px;text-align:center;top:337.31px;font-size:14.4px;letter-spacing:0.1px;color:#dcdcdc;font-weight:normal;font-family:'Liberation Sans', sans-serif;">20.0</div>
<div class="a" style="left:934px;top:334px;width:60px;height:22px;box-sizing:border-box;background:linear-gradient(#2d3234,#272b2d);border:1px solid #181b1c;border-bottom-color:#131616;border-radius:4px;box-shadow:inset 0 1px 0 rgba(255,255,255,0.04);"></div>
<div class="a t" style="left:934.00px;width:60px;text-align:center;top:337.55px;font-size:14px;letter-spacing:0px;color:#dedede;font-weight:normal;font-family:'Liberation Sans', sans-serif;transform:scaleX(0.97);transform-origin:center center;">+</div>
<div class="a" style="left:997px;top:334px;width:60px;height:22px;box-sizing:border-box;background:linear-gradient(#2d3234,#272b2d);border:1px solid #181b1c;border-bottom-color:#131616;border-radius:4px;box-shadow:inset 0 1px 0 rgba(255,255,255,0.04);"></div>
<div class="a t" style="left:997.00px;width:60px;text-align:center;top:337.55px;font-size:14px;letter-spacing:0px;color:#dedede;font-weight:normal;font-family:'Liberation Sans', sans-serif;transform:scaleX(0.97);transform-origin:center center;">-</div>
<div class="a" style="left:756px;top:384px;width:304px;height:1px;background:#2b3033;"></div>
<div class="a t" style="left:757.00px;width:110px;text-align:center;top:364.81px;font-size:14.4px;letter-spacing:0.1px;color:#dcdcdc;font-weight:normal;font-family:'Liberation Sans', sans-serif;">Vel. tol, %:</div>
<div class="a t" style="left:870.00px;width:60px;text-align:center;top:364.81px;font-size:14.4px;letter-spacing:0.1px;color:#dcdcdc;font-weight:normal;font-family:'Liberation Sans', sans-serif;">90.0</div>
<div class="a" style="left:934px;top:361px;width:60px;height:23px;box-sizing:border-box;background:linear-gradient(#2d3234,#272b2d);border:1px solid #181b1c;border-bottom-color:#131616;border-radius:4px;box-shadow:inset 0 1px 0 rgba(255,255,255,0.04);"></div>
<div class="a t" style="left:934.00px;width:60px;text-align:center;top:365.05px;font-size:14px;letter-spacing:0px;color:#dedede;font-weight:normal;font-family:'Liberation Sans', sans-serif;transform:scaleX(0.97);transform-origin:center center;">+</div>
<div class="a" style="left:997px;top:361px;width:60px;height:23px;box-sizing:border-box;background:linear-gradient(#2d3234,#272b2d);border:1px solid #181b1c;border-bottom-color:#131616;border-radius:4px;box-shadow:inset 0 1px 0 rgba(255,255,255,0.04);"></div>
<div class="a t" style="left:997.00px;width:60px;text-align:center;top:365.05px;font-size:14px;letter-spacing:0px;color:#dedede;font-weight:normal;font-family:'Liberation Sans', sans-serif;transform:scaleX(0.97);transform-origin:center center;">-</div>
<div class="a" style="left:756px;top:384px;width:304px;height:1px;background:#23272a;"></div>
<div class="a t" style="left:765.50px;top:387.81px;font-size:14.4px;letter-spacing:1.0px;color:#eeeeec;font-weight:bold;font-family:'Liberation Sans', sans-serif;">Pierce parameters</div>
<div class="a" style="left:912px;top:395px;width:146px;height:1px;background:#23272a;"></div>
<div class="a" style="left:756px;top:428px;width:304px;height:1px;background:#2b3033;"></div>
<div class="a t" style="left:757.00px;width:110px;text-align:center;top:409.81px;font-size:14.4px;letter-spacing:0.1px;color:#dcdcdc;font-weight:normal;font-family:'Liberation Sans', sans-serif;">Pierce hght:</div>
<div class="a t" style="left:873.50px;width:60px;text-align:center;top:409.81px;font-size:14.4px;letter-spacing:0.1px;color:#dcdcdc;font-weight:normal;font-family:'Liberation Sans', sans-serif;">9.0</div>
<div class="a" style="left:940px;top:405px;width:57px;height:22px;box-sizing:border-box;background:linear-gradient(#2d3234,#272b2d);border:1px solid #181b1c;border-bottom-color:#131616;border-radius:4px;box-shadow:inset 0 1px 0 rgba(255,255,255,0.04);"></div>
<div class="a t" style="left:940.00px;width:57px;text-align:center;top:408.55px;font-size:14px;letter-spacing:0px;color:#dedede;font-weight:normal;font-family:'Liberation Sans', sans-serif;transform:scaleX(0.97);transform-origin:center center;">+</div>
<div class="a" style="left:1000px;top:405px;width:57px;height:22px;box-sizing:border-box;background:linear-gradient(#2d3234,#272b2d);border:1px solid #181b1c;border-bottom-color:#131616;border-radius:4px;box-shadow:inset 0 1px 0 rgba(255,255,255,0.04);"></div>
<div class="a t" style="left:1000.00px;width:57px;text-align:center;top:408.55px;font-size:14px;letter-spacing:0px;color:#dedede;font-weight:normal;font-family:'Liberation Sans', sans-serif;transform:scaleX(0.97);transform-origin:center center;">-</div>
<div class="a" style="left:756px;top:454px;width:304px;height:1px;background:#2b3033;"></div>
<div class="a t" style="left:757.00px;width:110px;text-align:center;top:435.81px;font-size:14.4px;letter-spacing:0.1px;color:#dcdcdc;font-weight:normal;font-family:'Liberation Sans', sans-serif;">Jump hght:</div>
<div class="a t" style="left:873.50px;width:60px;text-align:center;top:435.81px;font-size:14.4px;letter-spacing:0.1px;color:#dcdcdc;font-weight:normal;font-family:'Liberation Sans', sans-serif;">4.0</div>
<div class="a" style="left:940px;top:431px;width:57px;height:22px;box-sizing:border-box;background:linear-gradient(#2d3234,#272b2d);border:1px solid #181b1c;border-bottom-color:#131616;border-radius:4px;box-shadow:inset 0 1px 0 rgba(255,255,255,0.04);"></div>
<div class="a t" style="left:940.00px;width:57px;text-align:center;top:434.55px;font-size:14px;letter-spacing:0px;color:#dedede;font-weight:normal;font-family:'Liberation Sans', sans-serif;transform:scaleX(0.97);transform-origin:center center;">+</div>
<div class="a" style="left:1000px;top:431px;width:57px;height:22px;box-sizing:border-box;background:linear-gradient(#2d3234,#272b2d);border:1px solid #181b1c;border-bottom-color:#131616;border-radius:4px;box-shadow:inset 0 1px 0 rgba(255,255,255,0.04);"></div>
<div class="a t" style="left:1000.00px;width:57px;text-align:center;top:434.55px;font-size:14px;letter-spacing:0px;color:#dedede;font-weight:normal;font-family:'Liberation Sans', sans-serif;transform:scaleX(0.97);transform-origin:center center;">-</div>
<div class="a" style="left:756px;top:480px;width:304px;height:1px;background:#2b3033;"></div>
<div class="a t" style="left:757.00px;width:110px;text-align:center;top:461.81px;font-size:14.4px;letter-spacing:0.1px;color:#dcdcdc;font-weight:normal;font-family:'Liberation Sans', sans-serif;">Pierce del.:</div>
<div class="a t" style="left:873.50px;width:60px;text-align:center;top:461.81px;font-size:14.4px;letter-spacing:0.1px;color:#dcdcdc;font-weight:normal;font-family:'Liberation Sans', sans-serif;">0.1</div>
<div class="a" style="left:940px;top:457px;width:57px;height:22px;box-sizing:border-box;background:linear-gradient(#2d3234,#272b2d);border:1px solid #181b1c;border-bottom-color:#131616;border-radius:4px;box-shadow:inset 0 1px 0 rgba(255,255,255,0.04);"></div>
<div class="a t" style="left:940.00px;width:57px;text-align:center;top:460.55px;font-size:14px;letter-spacing:0px;color:#dedede;font-weight:normal;font-family:'Liberation Sans', sans-serif;transform:scaleX(0.97);transform-origin:center center;">+</div>
<div class="a" style="left:1000px;top:457px;width:57px;height:22px;box-sizing:border-box;background:linear-gradient(#2d3234,#272b2d);border:1px solid #181b1c;border-bottom-color:#131616;border-radius:4px;box-shadow:inset 0 1px 0 rgba(255,255,255,0.04);"></div>
<div class="a t" style="left:1000.00px;width:57px;text-align:center;top:460.55px;font-size:14px;letter-spacing:0px;color:#dedede;font-weight:normal;font-family:'Liberation Sans', sans-serif;transform:scaleX(0.97);transform-origin:center center;">-</div>
<div class="a" style="left:756px;top:506px;width:304px;height:1px;background:#2b3033;"></div>
<div class="a t" style="left:757.00px;width:110px;text-align:center;top:487.81px;font-size:14.4px;letter-spacing:0.1px;color:#dcdcdc;font-weight:normal;font-family:'Liberation Sans', sans-serif;">Cut hght:</div>
<div class="a t" style="left:873.50px;width:60px;text-align:center;top:487.81px;font-size:14.4px;letter-spacing:0.1px;color:#dcdcdc;font-weight:normal;font-family:'Liberation Sans', sans-serif;">9.0</div>
<div class="a" style="left:940px;top:483px;width:57px;height:22px;box-sizing:border-box;background:linear-gradient(#2d3234,#272b2d);border:1px solid #181b1c;border-bottom-color:#131616;border-radius:4px;box-shadow:inset 0 1px 0 rgba(255,255,255,0.04);"></div>
<div class="a t" style="left:940.00px;width:57px;text-align:center;top:486.55px;font-size:14px;letter-spacing:0px;color:#dedede;font-weight:normal;font-family:'Liberation Sans', sans-serif;transform:scaleX(0.97);transform-origin:center center;">+</div>
<div class="a" style="left:1000px;top:483px;width:57px;height:22px;box-sizing:border-box;background:linear-gradient(#2d3234,#272b2d);border:1px solid #181b1c;border-bottom-color:#131616;border-radius:4px;box-shadow:inset 0 1px 0 rgba(255,255,255,0.04);"></div>
<div class="a t" style="left:1000.00px;width:57px;text-align:center;top:486.55px;font-size:14px;letter-spacing:0px;color:#dedede;font-weight:normal;font-family:'Liberation Sans', sans-serif;transform:scaleX(0.97);transform-origin:center center;">-</div>
<div class="a" style="left:756px;top:532px;width:304px;height:1px;background:#2b3033;"></div>
<div class="a t" style="left:757.00px;width:110px;text-align:center;top:513.81px;font-size:14.4px;letter-spacing:0.1px;color:#dcdcdc;font-weight:normal;font-family:'Liberation Sans', sans-serif;">Stop del.:</div>
<div class="a t" style="left:873.50px;width:60px;text-align:center;top:513.81px;font-size:14.4px;letter-spacing:0.1px;color:#dcdcdc;font-weight:normal;font-family:'Liberation Sans', sans-serif;">10.0</div>
<div class="a" style="left:940px;top:509px;width:57px;height:22px;box-sizing:border-box;background:linear-gradient(#2d3234,#272b2d);border:1px solid #181b1c;border-bottom-color:#131616;border-radius:4px;box-shadow:inset 0 1px 0 rgba(255,255,255,0.04);"></div>
<div class="a t" style="left:940.00px;width:57px;text-align:center;top:512.55px;font-size:14px;letter-spacing:0px;color:#dedede;font-weight:normal;font-family:'Liberation Sans', sans-serif;transform:scaleX(0.97);transform-origin:center center;">+</div>
<div class="a" style="left:1000px;top:509px;width:57px;height:22px;box-sizing:border-box;background:linear-gradient(#2d3234,#272b2d);border:1px solid #181b1c;border-bottom-color:#131616;border-radius:4px;box-shadow:inset 0 1px 0 rgba(255,255,255,0.04);"></div>
<div class="a t" style="left:1000.00px;width:57px;text-align:center;top:512.55px;font-size:14px;letter-spacing:0px;color:#dedede;font-weight:normal;font-family:'Liberation Sans', sans-serif;transform:scaleX(0.97);transform-origin:center center;">-</div>
<div class="a" style="left:756px;top:558px;width:304px;height:1px;background:#2b3033;"></div>
<div class="a t" style="left:757.00px;width:110px;text-align:center;top:539.81px;font-size:14.4px;letter-spacing:0.1px;color:#dcdcdc;font-weight:normal;font-family:'Liberation Sans', sans-serif;">Safe Z:</div>
<div class="a t" style="left:873.50px;width:60px;text-align:center;top:539.81px;font-size:14.4px;letter-spacing:0.1px;color:#dcdcdc;font-weight:normal;font-family:'Liberation Sans', sans-serif;">30.0</div>
<div class="a" style="left:940px;top:535px;width:57px;height:22px;box-sizing:border-box;background:linear-gradient(#2d3234,#272b2d);border:1px solid #181b1c;border-bottom-color:#131616;border-radius:4px;box-shadow:inset 0 1px 0 rgba(255,255,255,0.04);"></div>
<div class="a t" style="left:940.00px;width:57px;text-align:center;top:538.55px;font-size:14px;letter-spacing:0px;color:#dedede;font-weight:normal;font-family:'Liberation Sans', sans-serif;transform:scaleX(0.97);transform-origin:center center;">+</div>
<div class="a" style="left:1000px;top:535px;width:57px;height:22px;box-sizing:border-box;background:linear-gradient(#2d3234,#272b2d);border:1px solid #181b1c;border-bottom-color:#131616;border-radius:4px;box-shadow:inset 0 1px 0 rgba(255,255,255,0.04);"></div>
<div class="a t" style="left:1000.00px;width:57px;text-align:center;top:538.55px;font-size:14px;letter-spacing:0px;color:#dedede;font-weight:normal;font-family:'Liberation Sans', sans-serif;transform:scaleX(0.97);transform-origin:center center;">-</div>
<div class="a" style="left:756px;top:587px;width:304px;height:1px;background:#2b3033;"></div>
<div class="a t" style="left:757.00px;width:110px;text-align:center;top:567.31px;font-size:14.4px;letter-spacing:0.1px;color:#dcdcdc;font-weight:normal;font-family:'Liberation Sans', sans-serif;">Z speed:</div>
<div class="a t" style="left:873.50px;width:60px;text-align:center;top:567.31px;font-size:14.4px;letter-spacing:0.1px;color:#dcdcdc;font-weight:normal;font-family:'Liberation Sans', sans-serif;">800.0</div>
<div class="a" style="left:940px;top:561px;width:57px;height:25px;box-sizing:border-box;background:linear-gradient(#2d3234,#272b2d);border:1px solid #181b1c;border-bottom-color:#131616;border-radius:4px;box-shadow:inset 0 1px 0 rgba(255,255,255,0.04);"></div>
<div class="a t" style="left:940.00px;width:57px;text-align:center;top:566.05px;font-size:14px;letter-spacing:0px;color:#dedede;font-weight:normal;font-family:'Liberation Sans', sans-serif;transform:scaleX(0.97);transform-origin:center center;">+</div>
<div class="a" style="left:1000px;top:561px;width:57px;height:25px;box-sizing:border-box;background:linear-gradient(#2d3234,#272b2d);border:1px solid #181b1c;border-bottom-color:#131616;border-radius:4px;box-shadow:inset 0 1px 0 rgba(255,255,255,0.04);"></div>
<div class="a t" style="left:1000.00px;width:57px;text-align:center;top:566.05px;font-size:14px;letter-spacing:0px;color:#dedede;font-weight:normal;font-family:'Liberation Sans', sans-serif;transform:scaleX(0.97);transform-origin:center center;">-</div>
<div class="a" style="left:757px;top:589px;width:303px;height:30px;background:#898989;"></div>
<div class="a t" style="left:763.00px;top:600.13px;font-size:10px;letter-spacing:0.3px;color:#222;font-weight:normal;font-family:'Liberation Sans', sans-serif;">0.0</div>
<div class="a t" style="left:888.50px;width:40px;text-align:center;top:600.13px;font-size:10px;letter-spacing:0.3px;color:#222;font-weight:normal;font-family:'Liberation Sans', sans-serif;">0.0</div>
<div class="a t" style="left:995.00px;width:60px;text-align:right;top:600.13px;font-size:10px;letter-spacing:0.3px;color:#222;font-weight:normal;font-family:'Liberation Sans', sans-serif;">100.0</div>
<div class="a" style="left:756px;top:616px;width:12px;height:73px;background:#30363a;"></div>
<div class="a" style="left:768px;top:620px;width:296px;height:96px;background:#d9d9d9;"></div>
<div class="a" style="left:751px;top:689px;width:17px;height:27px;background:#d9d9d9;"></div>
<div class="a" style="left:766px;top:620px;width:2px;height:10px;background:#fff;"></div>
<div class="a" style="left:767px;top:630px;width:1px;height:52px;background:#000;"></div>
<div class="a t" style="left:786.00px;top:623.41px;font-size:14.4px;letter-spacing:0.1px;color:#000;font-weight:normal;font-family:'Liberation Sans', sans-serif;">Linux parallel port @888 not found</div>
<div class="a t" style="left:770.50px;top:660.81px;font-size:14.4px;letter-spacing:0.1px;color:#000;font-weight:normal;font-family:'Liberation Sans', sans-serif;">Linux parallel port @60928 not found</div>
<svg class="a" style="left:1014px;top:622px;" width="34" height="34" viewBox="0 0 34 34"><circle cx="16" cy="17" r="14.5" fill="#000" opacity="0.25"/><circle cx="15" cy="15.5" r="14.5" fill="#f00000"/><path d="M8.2 8.7l13.6 13.6M21.8 8.7l-13.6 13.6" stroke="#fff" stroke-width="4"/></svg>
<div class="a" style="left:1048px;top:631px;width:14px;height:14px;box-sizing:border-box;background:#d9d9d9;border:1px solid;border-color:#ffffff #828282 #828282 #ffffff;"></div>
<svg class="a" style="left:1050px;top:633px;" width="10" height="10" viewBox="0 0 10 10"><path d="M2 2l6 6M8 2l-6 6" stroke="#000" stroke-width="1.3"/></svg>
<svg class="a" style="left:1014px;top:661px;" width="34" height="34" viewBox="0 0 34 34"><circle cx="16" cy="17" r="14.5" fill="#000" opacity="0.25"/><circle cx="15" cy="15.5" r="14.5" fill="#f00000"/><path d="M8.2 8.7l13.6 13.6M21.8 8.7l-13.6 13.6" stroke="#fff" stroke-width="4"/></svg>
<div class="a" style="left:1048px;top:670px;width:14px;height:14px;box-sizing:border-box;background:#d9d9d9;border:1px solid;border-color:#ffffff #828282 #828282 #ffffff;"></div>
<svg class="a" style="left:1050px;top:672px;" width="10" height="10" viewBox="0 0 10 10"><path d="M2 2l6 6M8 2l-6 6" stroke="#000" stroke-width="1.3"/></svg>
<svg class="a" style="left:0px;top:0px;pointer-events:none;" width="1068" height="717" viewBox="0 0 1068 717"><g fill="none" stroke="#ff0000" stroke-width="1" stroke-linejoin="round" stroke-linecap="round"><path d="M243.7 298.6L243.7 286.4 245.1 279.5 247.1 272.7 250 267.8 261.3 267.6 265.2 269.3 267.1 271.2 273 273.7 275.9 276.1 280.8 278.1 285.7 281 289.1 284.4 289.1 296.1 286.6 299.1 281.8 302 276.9 304.9 273 308.8 271.5 312.7 270.5 316.6 270.5 324.5"/><path d="M264.7 360.9L257.4 364.6 253.2 366.7 249.1 370.9 245.9 379.3 243.8 389.7 241.7 400.2 241.3 419 242.8 444.1 243.8 465.1 245.4 480 246.7 484.6 254.7 489.9 264 494.6 270.6 501.2 272.6 510.5 271.3 525.1 269.3 538.3 266.6 551.6 263.3 560.8 261.3 565.5 256 567.5 192.4 567.5 176.5 561.5 165.9 556.9 162.6 548.9 163.3 543.6 161.3 537 160.6 530.4 162.6 522.4 167.2 515.8 175.2 507.8 185.8 501.2 197.7 495.9 209.6 492.6 222.9 489.3 240.1 487.3 250.7 486.6"/></g><rect x="271" y="340" width="1" height="1" fill="#333"/></svg>
<svg class="a" style="left:196px;top:518px;" width="18" height="24" viewBox="0 0 18 24"><path d="M9 1.5L14.5 7.5H11V16.5H14.5L9 22.5 3.5 16.5H7V7.5H3.5z" fill="#000" stroke="#fff" stroke-width="1.2" stroke-linejoin="round" style="filter:drop-shadow(1px 1px 0.8px rgba(0,0,0,0.5))"/></svg>
</body></html>
